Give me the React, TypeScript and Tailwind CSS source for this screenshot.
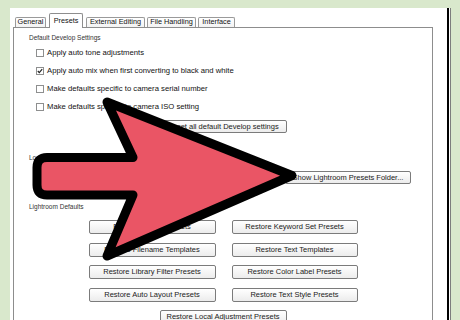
import React from "react";

const tabs = [
    { name: "General", w: "w-[31px]" },
    { name: "Presets", w: "w-[34px]", active: true },
    { name: "External Editing", w: "w-[59px]" },
    { name: "File Handling", w: "w-[49px]" },
    { name: "Interface", w: "w-[37px]" },
];

const checks = [
    { label: "Apply auto tone adjustments", on: false },
    { label: "Apply auto mix when first converting to black and white", on: true },
    { label: "Make defaults specific to camera serial number", on: false },
    { label: "Make defaults specific to camera ISO setting", on: false },
];

const restore = [
    ["Restore Export Presets", "Restore Keyword Set Presets"],
    ["Restore Filename Templates", "Restore Text Templates"],
    ["Restore Library Filter Presets", "Restore Color Label Presets"],
    ["Restore Auto Layout Presets", "Restore Text Style Presets"],
];

function Checkbox({ on }: { on?: boolean }) {
    return (
        <div className="w-[8px] h-[8px] border border-[#8e8f8f] bg-white flex items-center justify-center shrink-0">
            {on && (
                <svg width="6" height="6" viewBox="0 0 6 6">
                    <path d="M0.8 3 L2.3 4.6 L5.2 1.2" fill="none" stroke="#222" strokeWidth="1.2" />
                </svg>
            )}
        </div>
    );
}

function Btn({ label, w = "w-[127px]", h = "h-[14px]" }: { label: string; w?: string; h?: string }) {
    return (
        <div className={`${w} ${h} flex items-center justify-center border border-[#7b7b7b] rounded-[2px] bg-linear-to-b from-white to-[#ececec] text-[7.5px] text-[#1b1b1b] whitespace-nowrap`}>
            {label}
        </div>
    );
}

function GroupLabel({ text }: { text: string }) {
    return <div className="h-[12px] flex items-center pl-[15px] text-[6.5px] text-[#333]">{text}</div>;
}

function Arrow() {
    return (
        <svg className="absolute left-0 top-0" width="460" height="320" viewBox="0 0 460 320">
            <path
                d="M47 157.5 L133 157.5 L107 102 L292 175.5 L107 256 L133 195 L47 195 Q37 195 37 185 L37 167.5 Q37 157.5 47 157.5 Z"
                fill="#ea5565"
                stroke="#000"
                strokeWidth="9"
                strokeLinejoin="round"
            />
        </svg>
    );
}

export default function App() {
    return (
        <div className="relative w-[460px] h-[320px] overflow-hidden bg-[#d9e8cc] pt-[8px] pl-[10px] flex font-['Liberation_Sans',Arial,sans-serif]">
            <div className="w-[437px] h-full bg-white pt-[5px] pl-[3px] pr-[14px] flex flex-col">
                {/* tab strip */}
                <div className="flex items-end h-[15px] pl-[2px] gap-[2px] relative z-10">
                    {tabs.map((t) => (
                        <div
                            key={t.name}
                            className={
                                t.active
                                    ? `${t.w} h-[15px] mb-[-1px] mx-[1px] border border-b-0 border-[#8d8d8d] rounded-t-[2px] bg-white flex items-start justify-center pt-[2px] text-[7.3px] text-[#111]`
                                    : `${t.w} h-[10px] border border-b-0 border-[#9a9a9a] rounded-t-[2px] bg-linear-to-b from-white to-[#f3f3f3] flex items-center justify-center text-[7.3px] text-[#111] whitespace-nowrap`
                            }
                        >
                            {t.name}
                        </div>
                    ))}
                </div>
                {/* panel */}
                <div className="flex-1 border border-[#8d8d8d] border-b-0 flex flex-col pt-[4px] text-[7.7px] text-[#111]">
                    <GroupLabel text="Default Develop Settings" />
                    {checks.map((c) => (
                        <div key={c.label} className="h-[18px] flex items-center pl-[22px] gap-[3px] whitespace-nowrap">
                            <Checkbox on={c.on} />
                            <span>{c.label}</span>
                        </div>
                    ))}
                    <div className="mt-[4px] flex justify-center">
                        <Btn label="Reset all default Develop settings" h="h-[13px]" />
                    </div>

                    <div className="mt-[19px]">
                        <GroupLabel text="Location" />
                    </div>
                    <div className="mt-[7px] h-[13px] flex items-center justify-between pl-[22px] pr-[21px]">
                        <div className="flex items-center gap-[3px]">
                            <Checkbox />
                            <span>Store presets with catalog</span>
                        </div>
                        <Btn label="Show Lightroom Presets Folder..." w="w-[126px]" h="h-[13px]" />
                    </div>

                    <div className="mt-[17px]">
                        <GroupLabel text="Lightroom Defaults" />
                    </div>
                    <div className="mt-[7px] flex flex-col items-center gap-y-[8.5px]">
                        {restore.map(([a, b]) => (
                            <div key={a} className="flex gap-[16px]">
                                <Btn label={a} />
                                <Btn label={b} w="w-[126px]" />
                            </div>
                        ))}
                        <Btn label="Restore Local Adjustment Presets" />
                    </div>
                </div>
            </div>
            {/* window frame edge */}
            <div className="w-[2px] h-full bg-black" />
            <div className="w-[1px] h-full bg-white" />
            <div className="w-[1px] h-full bg-[#7d7d7d]" />
            <Arrow />
        </div>
    );
}
